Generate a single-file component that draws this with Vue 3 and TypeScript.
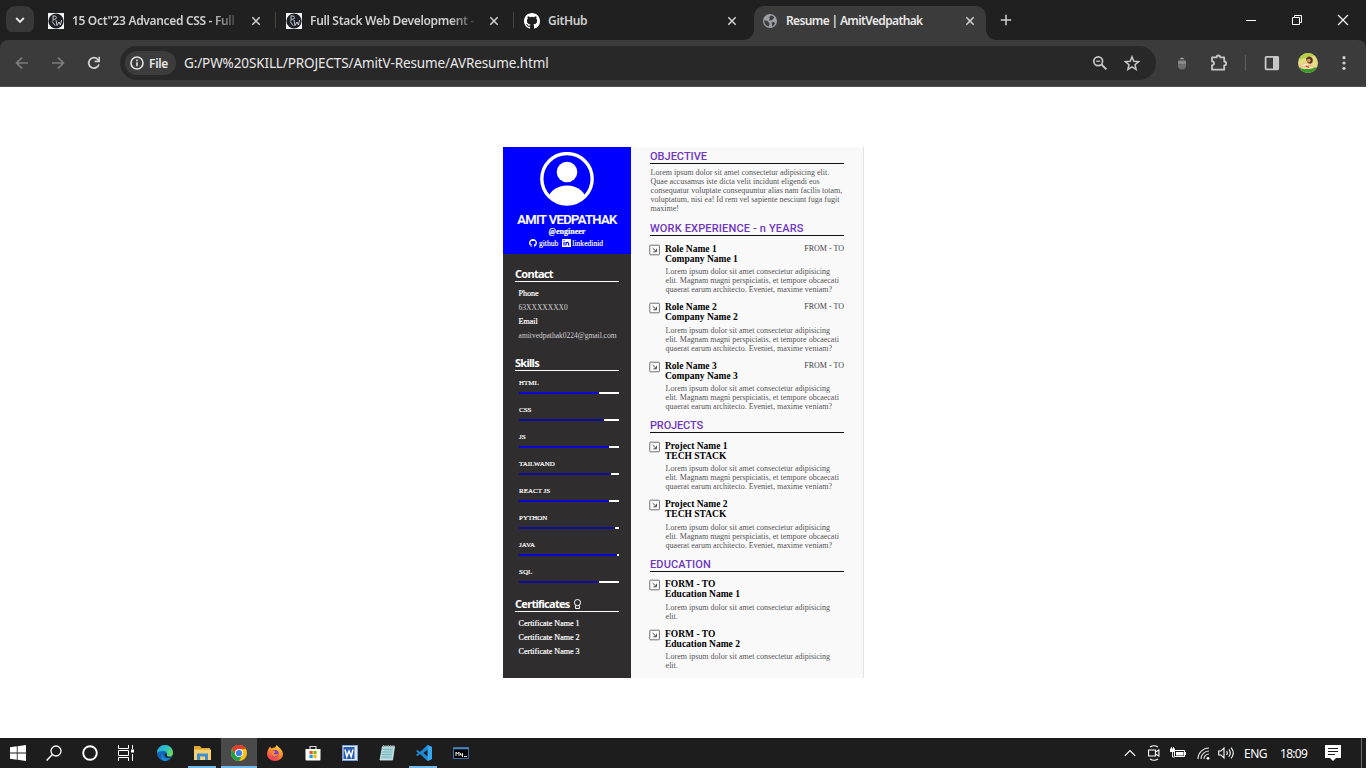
<script setup lang="ts">
interface Tab { title: string; icon: 'pw' | 'github' | 'globe'; active?: boolean }
interface Entry { title: string; sub: string; period?: string; lines: string[] }
interface Section { title: string; cls: string; entries: Entry[] }

const tabs: Tab[] = [
  { title: '15 Oct"23 Advanced CSS - Full', icon: 'pw' },
  { title: 'Full Stack Web Development -', icon: 'pw' },
  { title: 'GitHub', icon: 'github' },
  { title: 'Resume | AmitVedpathak', icon: 'globe', active: true },
]

const objective: string[] = [
  'Lorem ipsum dolor sit amet consectetur adipisicing elit.',
  'Quae accusamus iste dicta velit incidunt eligendi eos',
  'consequatur voluptate consequuntur alias nam facilis totam,',
  'voluptatum, nisi ea! Id rem vel sapiente nesciunt fuga fugit',
  'maxime!',
]

const longText: string[] = [
  'Lorem ipsum dolor sit amet consectetur adipisicing',
  'elit. Magnam magni perspiciatis, et tempore obcaecati',
  'quaerat earum architecto. Eveniet, maxime veniam?',
]
const shortText: string[] = ['Lorem ipsum dolor sit amet consectetur adipisicing', 'elit.']

const sections: Section[] = [
  {
    title: 'WORK EXPERIENCE - n YEARS',
    cls: 'work',
    entries: [1, 2, 3].map((n) => ({ title: `Role Name ${n}`, sub: `Company Name ${n}`, period: 'FROM - TO', lines: longText })),
  },
  {
    title: 'PROJECTS',
    cls: 'projects',
    entries: [1, 2].map((n) => ({ title: `Project Name ${n}`, sub: 'TECH STACK', lines: longText })),
  },
  {
    title: 'EDUCATION',
    cls: 'education',
    entries: [1, 2].map((n) => ({ title: 'FORM - TO', sub: `Education Name ${n}`, lines: shortText })),
  },
]

const skills: { name: string; level: number }[] = [
  { name: 'HTML', level: 80 },
  { name: 'CSS', level: 85 },
  { name: 'JS', level: 90 },
  { name: 'TAILWAND', level: 92 },
  { name: 'REACT JS', level: 90 },
  { name: 'PYTHON', level: 96 },
  { name: 'JAVA', level: 98 },
  { name: 'SQL', level: 80 },
]
const certificates: string[] = ['Certificate Name 1', 'Certificate Name 2', 'Certificate Name 3']

const githubPath =
  'M8 0C3.58 0 0 3.58 0 8c0 3.54 2.29 6.53 5.47 7.59.4.07.55-.17.55-.38 0-.19-.01-.82-.01-1.49-2.01.37-2.53-.49-2.69-.94-.09-.23-.48-.94-.82-1.13-.28-.15-.68-.52-.01-.53.63-.01 1.08.58 1.23.82.72 1.21 1.87.87 2.33.66.07-.52.28-.87.51-1.07-1.78-.2-3.64-.89-3.64-3.95 0-.87.31-1.59.82-2.15-.08-.2-.36-1.02.08-2.12 0 0 .67-.21 2.2.82a7.6 7.6 0 0 1 4 0c1.53-1.04 2.2-.82 2.2-.82.44 1.1.16 1.92.08 2.12.51.56.82 1.27.82 2.15 0 3.07-1.87 3.75-3.65 3.95.29.25.54.73.54 1.48 0 1.07-.01 1.93-.01 2.2 0 .21.15.46.55.38A8.01 8.01 0 0 0 16 8c0-4.42-3.58-8-8-8z'
</script>

<template>
  <div class="screen">
    <header class="tabstrip">
      <div class="tab-search">
        <svg width="10" height="8" viewBox="0 0 10 8"><path d="M1.2 2l3.8 3.8L8.8 2" fill="none" stroke="#e6e6e6" stroke-width="1.9" /></svg>
      </div>
      <div class="tabs">
        <div v-for="(tab, i) in tabs" :key="tab.title" class="tab" :class="{ active: tab.active, divided: i < 2 }">
          <svg v-if="tab.icon === 'pw'" class="favicon" viewBox="0 0 16 16">
            <rect width="16" height="16" fill="#f4f4f4" />
            <circle cx="8" cy="8" r="7.6" fill="#1a2026" />
            <path d="M5 2.6v5.6M5 3h1.8a1.6 1.6 0 0 1 0 3.2H5M4.2 8.4l3 4.4M8 7l1 5.6 2-3.6 1.4 3 1.2-5" fill="none" stroke="#d6d9dc" stroke-width=".9" />
          </svg>
          <svg v-else-if="tab.icon === 'github'" class="favicon" viewBox="0 0 16 16"><path :d="githubPath" fill="#fff" /></svg>
          <svg v-else class="favicon globe" viewBox="0 0 14 14">
            <circle cx="7" cy="7" r="7" fill="#9aa0a6" />
            <path d="M7.8 1.4c1.4.1 2.6.8 3.5 1.9L10 5.2 8 6.5H5.8L7 4.4 6 3.6zM1.3 6.2l2.6.6 2 1.7.7 1.8-1 2.1A5.8 5.8 0 0 1 1.3 6.2zM8.4 8.5l2.7-.4.9 1.5a6 6 0 0 1-3 2.9l.1-2.1z" fill="#3c3c3c" />
          </svg>
          <span class="tab-title">{{ tab.title }}</span>
          <svg class="close" viewBox="0 0 10 10"><path d="M1.3 1.3l7.4 7.4M8.7 1.3L1.3 8.7" stroke="#d4d4d4" stroke-width="1.5" /></svg>
        </div>
      </div>
      <svg class="plus" viewBox="0 0 12 12"><path d="M6 .8v10.4M.8 6h10.4" stroke="#d0d0d0" stroke-width="1.5" /></svg>
      <div class="win-controls">
        <svg width="12" height="12" viewBox="0 0 12 12"><path d="M1 6.5h10" stroke="#fff" /></svg>
        <svg width="12" height="12" viewBox="0 0 12 12"><path d="M1.5 3.5h7v7h-7zM3.5 3.5v-2h7v7h-2" fill="none" stroke="#fff" /></svg>
        <svg width="12" height="12" viewBox="0 0 12 12"><path d="M1 1l10 10M11 1L1 11" stroke="#fff" stroke-width="1.1" /></svg>
      </div>
    </header>

    <div class="toolbar">
      <div class="nav">
        <svg width="14" height="14" viewBox="0 0 14 14"><path d="M13 7H1.8M7 1.6L1.6 7 7 12.4" fill="none" stroke="#7b7b7b" stroke-width="1.7" /></svg>
        <svg width="14" height="14" viewBox="0 0 14 14"><path d="M1 7h11.2M7 1.6L12.4 7 7 12.4" fill="none" stroke="#7b7b7b" stroke-width="1.7" /></svg>
        <svg width="14" height="14" viewBox="0 0 14 14"><path d="M11.9 8.4A5.2 5.2 0 1 1 10.8 3.4L12.2 5" fill="none" stroke="#d0d0d0" stroke-width="1.8" /><path d="M13 .8v5.4H7.6V4.6h3.8V.8z" fill="#d0d0d0" /></svg>
      </div>
      <div class="omnibox">
        <div class="chip">
          <svg width="14" height="14" viewBox="0 0 14 14"><circle cx="7" cy="7" r="6" fill="none" stroke="#e3e3e3" stroke-width="1.6" /><path d="M7 6.2v4M7 3.6v1.6" stroke="#e3e3e3" stroke-width="1.6" /></svg>
          <span>File</span>
        </div>
        <span class="url">G:/PW%20SKILL/PROJECTS/AmitV-Resume/AVResume.html</span>
        <svg class="lens" width="16" height="16" viewBox="0 0 16 16"><circle cx="6.2" cy="6.2" r="4.4" fill="none" stroke="#c7c7c7" stroke-width="1.7" /><path d="M9.4 9.4l5 5" stroke="#c7c7c7" stroke-width="2" /><path d="M4.2 6.2h4" stroke="#c7c7c7" stroke-width="1.3" /></svg>
        <svg class="star" width="16" height="16" viewBox="0 0 16 16"><path d="M8 1.8l1.8 4.4 4.8.4-3.6 3.1 1.1 4.6L8 11.8l-4.1 2.5L5 9.7 1.4 6.6l4.8-.4z" fill="none" stroke="#c7c7c7" stroke-width="1.5" /></svg>
      </div>
      <div class="extensions">
        <svg width="8" height="14" viewBox="0 0 8 14"><path d="M1.4 3.2Q4-.4 6.6 3.2z" fill="#a2a2a2" /><rect x="0" y="4.6" width="8" height="3.8" rx="1" fill="#8a8a8a" /><path d="M0 8h8v2.3Q7.200 13.500 4 13.600.8 13.500 0 10.300z" fill="#707070" /></svg>
        <svg width="18" height="18" viewBox="0 0 18 18"><path d="M2 3.3h4.6c0-2.4 3.6-2.4 3.6 0h4v4.2c2.6.3 2.6 3.600 0 3.900v4.300H2v-4.300c2.700-.4 2.700-3.700 0-4z" fill="none" stroke="#c7c7c7" stroke-width="1.8" stroke-linejoin="round" /></svg>
        <i class="bar-sep"></i>
        <svg width="16" height="16" viewBox="0 0 16 16"><rect x="1.6" y="1.9" width="12.6" height="12.4" rx=".8" fill="none" stroke="#c7c7c7" stroke-width="1.8" /><path d="M9 1.5h5.5v13H9z" fill="#c7c7c7" /></svg>
        <svg width="20" height="20" viewBox="0 0 20 20">
          <defs><clipPath id="avatar"><circle cx="10" cy="10" r="10" /></clipPath></defs>
          <g clip-path="url(#avatar)">
            <rect width="20" height="20" fill="#e3dc84" />
            <path d="M0 0h20v3.5l-7-.5-6 2-7 2z" fill="#b4cf45" />
            <path d="M0 14.5h20V20H0z" fill="#3c9a2b" />
            <path d="M1.5 14Q1 10.5 5 10.5q4-1.5 8 1l3.5 2.5-2 1.5q-7 1-13-1.5z" fill="#f0c48a" />
            <path d="M8.500 5q3.500-3 6 .5 1 3.500-1.500 5-4.500 1-5-5.500z" fill="#5c3220" />
            <circle cx="10.8" cy="7.6" r="1.8" fill="#d99c5d" />
            <path d="M4 12.5l6-1.5M3 15q6 1 12-.5" fill="none" stroke="#fff1cc" />
            <path d="M8 13l3 1.5" stroke="#b0482c" stroke-width="1.2" />
          </g>
        </svg>
        <svg width="4" height="16" viewBox="0 0 4 16" fill="#d0d0d0"><circle cx="2" cy="2.7" r="1.6" /><circle cx="2" cy="8" r="1.6" /><circle cx="2" cy="13.3" r="1.6" /></svg>
      </div>
    </div>

    <main class="page">
      <article class="resume">
        <aside class="side">
          <div class="profile">
            <svg class="portrait" viewBox="0 0 54 54">
              <defs><clipPath id="bust"><circle cx="27" cy="27" r="25" /></clipPath></defs>
              <circle cx="27" cy="26.8" r="25.2" fill="none" stroke="#fff" stroke-width="3.4" />
              <circle cx="27" cy="20" r="10.3" fill="#fff" />
              <ellipse cx="27" cy="50" rx="19.6" ry="16.6" fill="#fff" clip-path="url(#bust)" />
            </svg>
            <h1>AMIT VEDPATHAK</h1>
            <p class="handle">@engineer</p>
            <div class="links">
              <svg width="8" height="8" viewBox="0 0 16 16"><path :d="githubPath" fill="#fff" /></svg>
              <span class="gh">github</span>
              <svg width="9" height="8" viewBox="0 0 9 8"><rect width="9" height="8" rx=".6" fill="#fff" /><path d="M2 3.1v3.5M4 6.6V3.1M4 4.5q.2-1.1 1.3-1.1T6.6 4.6v2" fill="none" stroke="#00f" stroke-width="1.1" /><path d="M1.4 1.2h1.2v1.1H1.4z" fill="#00f" /></svg>
              <span class="li">linkedinid</span>
            </div>
          </div>
          <section class="contact">
            <h3>Contact</h3>
            <p>Phone</p>
            <p class="dim">63XXXXXXX0</p>
            <p>Email</p>
            <p class="dim">amitvedpathak0224@gmail.com</p>
          </section>
          <section class="skills">
            <h3>Skills</h3>
            <div v-for="s in skills" :key="s.name" class="skill">
              <span>{{ s.name }}</span>
              <div class="meter"><div class="fill" :style="{ width: s.level + '%' }"></div></div>
            </div>
          </section>
          <section class="certs">
            <h3>
              <span>Certificates</span>
              <svg width="9" height="10" viewBox="0 0 9 10"><circle cx="4.5" cy="3.6" r="3.1" fill="none" stroke="#fff" /><path d="M2.6 6.3v3.2h3.8V6.3" fill="none" stroke="#fff" /></svg>
            </h3>
            <p v-for="c in certificates" :key="c">{{ c }}</p>
          </section>
        </aside>

        <div class="content">
          <section class="objective">
            <h2>OBJECTIVE</h2>
            <p class="copy"><span v-for="l in objective" :key="l">{{ l }}</span></p>
          </section>
          <section v-for="s in sections" :key="s.title" :class="s.cls">
            <h2>{{ s.title }}</h2>
            <div v-for="(e, i) in s.entries" :key="i" class="entry">
              <svg class="marker" viewBox="0 0 11 11"><rect x=".8" y=".2" width="9.6" height="9.6" rx=".6" fill="#fff" stroke="#6c7072" /><path d="M3.6 3l3.4 3.4M7.400 3.800v3H4.400" fill="none" stroke="#444" stroke-width="1" /></svg>
              <div class="entry-body">
                <div class="entry-head"><strong>{{ e.title }}</strong><span v-if="e.period">{{ e.period }}</span></div>
                <strong>{{ e.sub }}</strong>
                <p class="copy"><span v-for="l in e.lines" :key="l">{{ l }}</span></p>
              </div>
            </div>
          </section>
        </div>
      </article>
    </main>

    <footer class="taskbar">
      <div class="apps">
        <div class="cell"><svg width="16" height="16" viewBox="0 0 16 16" fill="#fff"><path d="M0 2.3l6.8-1v6.3H0zM7.6 1.2L16 0v7.6H7.6zM0 8.4h6.8v6.3L0 13.7zM7.6 8.4H16V16l-8.4-1.2z" /></svg></div>
        <div class="cell"><svg width="16" height="16" viewBox="0 0 16 16"><circle cx="10" cy="6" r="5" fill="none" stroke="#fff" stroke-width="1.3" /><path d="M6.4 9.6L.6 15.6" stroke="#fff" stroke-width="1.4" /></svg></div>
        <div class="cell"><svg width="16" height="16" viewBox="0 0 16 16"><circle cx="8" cy="8" r="6.8" fill="none" stroke="#fff" stroke-width="1.9" /></svg></div>
        <div class="cell"><svg width="16" height="16" viewBox="0 0 16 16"><path d="M.5 0v3.5h10V0M.5 16v-3.5h10V16M.5 5.5h10v5H.5zM14.5 0v4M14.5 9v7" fill="none" stroke="#fff" /><path d="M13 4.5h3v3h-3z" fill="#fff" /></svg></div>
        <div class="cell wide first">
          <svg width="16" height="16" viewBox="0 0 16 16">
            <defs><linearGradient id="edge" x1="0" x2="1" y1="0" y2=".5"><stop offset="0" stop-color="#2aa6e8" /><stop offset=".6" stop-color="#2cc3c0" /><stop offset="1" stop-color="#6bdc5a" /></linearGradient></defs>
            <circle cx="8" cy="8" r="8" fill="#1268b8" />
            <path d="M0 8a8 8 0 0 1 16 0c0 2.6-2.2 3.6-4.3 3.6-2 0-2.7-.8-1.9-1.7C10.6 8.5 9.5 6 6.5 6 3 6 .4 6.7 0 8z" fill="url(#edge)" />
            <path d="M5.4 9.7c.2 3 3 5 7.9 3.3-1.5 2-3.8 3.1-6 3-3-.8-3.9-4.8-1.9-6.3z" fill="#1a8ad8" />
            <path d="M8.2 8.2c-1 1.4-.2 4.1 2.6 4.6 2 .3 3.6-.3 4.3-1.1-2.3.5-4.9.1-5.4-1.1.5-1.4-.3-2.2-1.5-2.4z" fill="#1d1d1d" />
          </svg>
        </div>
        <div class="cell wide open"><svg width="17" height="16" viewBox="0 0 17 16"><path d="M0 1h6l1.5 2H16v4H0z" fill="#e0a32c" /><path d="M0 4.5h17V15H0z" fill="#f7d272" /><path d="M3 15V8.5h11V15h-3v-3.5H6V15z" fill="#3f8fd3" /></svg></div>
        <div class="cell current"><svg width="16" height="16" viewBox="0 0 16 16"><circle cx="8" cy="8" r="8" fill="#fbc116" /><path d="M1.07 4A8 8 0 0 1 14.93 4H8L4.54 10z" fill="#e33b2e" /><path d="M1.07 4A8 8 0 0 0 8 16l3.46-6H4.54z" fill="#24a148" /><circle cx="8" cy="8" r="4" fill="#fff" /><circle cx="8" cy="8" r="3.1" fill="#3b7ded" /></svg></div>
        <div class="cell wide">
          <svg width="16" height="16" viewBox="0 0 16 16">
            <defs><linearGradient id="fox" x1=".8" x2=".3" y1="0" y2="1"><stop offset="0" stop-color="#ffe03c" /><stop offset=".5" stop-color="#ff8a25" /><stop offset="1" stop-color="#f5305c" /></linearGradient></defs>
            <path d="M1.5 4L3 1.5l1.5 2Q6 2.5 8 2.5L9.8 0q1.2 2 3.2 3.3Q16 6 16 9a8 7 0 0 1-16 0q0-3 1.5-5z" fill="url(#fox)" />
            <circle cx="8" cy="8.6" r="3.6" fill="#7b3fd0" />
            <path d="M4 6.5l3.5-.8 1 1.5-2 1.2Q8 10 11.5 9 10 12 7 11.5 4 10.5 4 6.5z" fill="#ff8b28" />
          </svg>
        </div>
        <div class="cell wide word"><svg width="16" height="16" viewBox="0 0 16 16"><path d="M.5 4h15v10.5q0 1-1 1h-13q-1 0-1-1z" fill="#fff" /><path d="M5 4V1.5h6V4" fill="none" stroke="#d8d8d8" stroke-width="1.2" /><path d="M4.5 6h3.2v3.2H4.5z" fill="#f25022" /><path d="M8.4 6h3.2v3.2H8.4z" fill="#7fba00" /><path d="M4.5 9.9h3.2v3.2H4.5z" fill="#00a4ef" /><path d="M8.4 9.9h3.2v3.2H8.4z" fill="#ffb900" /></svg></div>
        <div class="cell wide word"><svg width="16" height="16" viewBox="0 0 16 16"><rect x=".5" y=".5" width="15" height="15" fill="#dfe9f7" stroke="#7ba1d6" /><rect x="1.5" y="2" width="11" height="12" fill="#2a5db4" /><path d="M3 4.5l1.8 7L7 6l2.2 5.5 1.8-7" fill="none" stroke="#fff" stroke-width="1.5" /></svg></div>
        <div class="cell wide word"><svg width="16" height="16" viewBox="0 0 16 16"><path d="M3.5 1.5h12L13.5 15H1z" fill="#a9d8dc" stroke="#e8f5f5" stroke-width=".8" /><path d="M3.5 4.5h10M3.2 7h10M3 9.5h10M2.5 12h10" stroke="#6ba7b1" stroke-width=".7" /><path d="M4 1h11.5" stroke="#8d9aa0" stroke-width="1.8" stroke-dasharray="1 .7" /></svg></div>
        <div class="cell wide open word"><svg width="16" height="16" viewBox="0 0 16 16"><path d="M11.5 0L16 2v12l-4.500 2L4 8.900 1.500 11 0 10l2.200-2L0 6l1.500-1L4 7.100zM11.700 4.500L7.300 8l4.400 3.500z" fill="#1d8ad6" fill-rule="evenodd" /><path d="M11.700 0L16 2v12l-4.300 2z" fill="#35a8f0" /></svg></div>
        <div class="cell wide word"><svg width="16" height="12" viewBox="0 0 16 12"><rect x=".5" y=".5" width="15" height="11" fill="#050505" stroke="#3b6ea5" /><path d="M1 1.500h14" stroke="#4a83c4" stroke-width="1.600" /><path d="M3 9V5l1.500 2L6 5v4M7.500 6v2h2M9.500 6v4M11 9.500h3" fill="none" stroke="#fff" stroke-width=".9" /></svg></div>
      </div>
      <div class="tray">
        <svg width="12" height="8" viewBox="0 0 12 8"><path d="M.8 6.8L6 1.6l5.2 5.2" fill="none" stroke="#fff" stroke-width="1.2" /></svg>
        <svg class="t-cam" width="12" height="16" viewBox="0 0 12 16"><path d="M.6 5h6.8v6H.6zM7.4 7l3.5-2v6l-3.5-2M2 2q4-2.6 8 0M2 14q4 2.6 8 0" fill="none" stroke="#fff" stroke-width="1.1" /></svg>
        <svg class="t-bat" width="16" height="12" viewBox="0 0 16 12"><path d="M4.5 3.5h10v6h-10z" fill="none" stroke="#fff" /><path d="M6 5h7.5v3.5H6zM15 5h1v3h-1zM0 1.5h5V5H0z" fill="#fff" /><path d="M1.5 0v2M3.5 0v2M2.5 5v5h2" fill="none" stroke="#fff" stroke-width=".9" /></svg>
        <svg class="t-wifi" width="13" height="13" viewBox="0 0 13 13"><path d="M1 12A11 11 0 0 1 12 1M4 12a8 8 0 0 1 8-8M7 12a5 5 0 0 1 5-5" fill="none" stroke="#ddd" stroke-width="1.1" /><circle cx="11" cy="11.3" r="1.4" fill="#fff" /></svg>
        <svg class="t-vol" width="17" height="14" viewBox="0 0 17 14"><path d="M.7 5H3L6 2v10L3 9H.7zM8.5 5q1.6 2 0 4M10.8 3.3q3 3.7 0 7.4M13 1.6q4.6 5.4 0 10.8" fill="none" stroke="#fff" stroke-width="1.1" /></svg>
        <span class="t-lang">ENG</span>
        <span class="t-time">18:09</span>
        <svg class="t-note" width="16" height="16" viewBox="0 0 16 16"><path d="M0 0h16v13h-5l-3 3-3-3H0z" fill="#fff" /><path d="M3 3.5h10M3 6.5h10M3 9.5h7" stroke="#1d1d1d" /></svg>
        <i></i>
      </div>
    </footer>
  </div>
</template>

<style>
body {
  margin: 0;
  background: #fff;
}
</style>

<style scoped>
.screen { width: 1366px; height: 768px; display: flex; flex-direction: column; overflow: hidden; background: #fff; font-family: "Noto Sans", sans-serif; }
svg { display: block; flex: none; }
h1, h2, h3, p { margin: 0; font-weight: normal; white-space: nowrap; }

.tabstrip { height: 40px; background: #202020; display: flex; align-items: center; }
.tab-search { width: 28px; height: 28px; margin-left: 6px; border-radius: 9px; background: #383838; display: flex; align-items: center; justify-content: center; }
.tabs { display: flex; margin-left: 4px; align-self: stretch; }
.tab { position: relative; box-sizing: border-box; width: 232px; height: 34px; margin: 6px 6px 0 0; padding: 0 9px 5px 10px; display: flex; align-items: center; border-radius: 10px 10px 0 0; color: #cfcfcf; }
.tab.divided::after { content: ""; position: absolute; right: -6px; top: 6px; width: 1px; height: 16px; background: #474747; }
.tab.active { background: #3b3b3b; color: #e8e8e8; margin-left: 2px; margin-right: 0; padding-right: 11px; }
.tab.active::before, .tab.active::after { content: ""; position: absolute; bottom: 0; width: 10px; height: 10px; }
.tab.active::before { left: -10px; background: radial-gradient(circle at 0 0, transparent 9.5px, #3b3b3b 10px); }
.tab.active::after { right: -10px; background: radial-gradient(circle at 100% 0, transparent 9.5px, #3b3b3b 10px); }
.favicon { width: 16px; height: 16px; }
.globe { width: 14px; height: 14px; margin: 0 1px 0 -1px; }
.tab-title { width: 165px; margin-left: 8px; font-size: 12px; line-height: 18px; font-weight: 600; letter-spacing: -0.33px; white-space: nowrap; }
.active .tab-title { letter-spacing: -0.64px; }
.divided .tab-title { mask-image: linear-gradient(90deg, #000 140px, transparent 170px); }
.close { width: 10px; height: 10px; margin-left: auto; }
.plus { width: 12px; height: 12px; margin-left: 14px; }
.win-controls { margin-left: auto; display: flex; gap: 34px; padding-right: 17px; }

.toolbar { box-sizing: border-box; height: 47px; background: #3b3b3b; border-bottom: 1px solid #505050; border-radius: 8px 8px 0 0; box-shadow: 0 -8px 0 #202020; display: flex; align-items: center; }
.nav { display: flex; gap: 22px; margin-left: 15px; }
.omnibox { width: 1036px; height: 34px; margin-left: 19px; border-radius: 17px; background: #282828; display: flex; align-items: center; flex: none; }
.chip { box-sizing: border-box; width: 51px; height: 24px; margin-left: 5px; padding-left: 5px; border-radius: 12px; background: #3c3c3c; display: flex; align-items: center; gap: 5px; font-size: 12px; font-weight: 600; letter-spacing: -0.3px; color: #e8e8e8; }
.url { margin-left: 8px; font-size: 13.5px; letter-spacing: -0.12px; color: #e8e8e8; white-space: nowrap; }
.lens { margin-left: auto; }
.star { margin: 0 16px; }
.extensions { display: flex; align-items: center; flex: 1; }
.extensions svg:nth-of-type(1) { margin-left: 22px; }
.extensions svg:nth-of-type(2) { margin-left: 24px; }
.bar-sep { width: 1px; height: 16px; margin-left: 17px; background: #5e5e5e; }
.extensions svg:nth-of-type(3) { margin-left: 18px; }
.extensions svg:nth-of-type(4) { margin-left: 18px; }
.extensions svg:nth-of-type(5) { margin-left: 24px; }

.page { height: 651px; box-sizing: border-box; padding: 60px 0 0 503px; background: #fff; }
.resume { width: 361px; height: 531px; display: flex; font-family: "Liberation Serif", serif; }
.side { width: 128px; background: #2f2d2e; color: #fff; font-size: 8px; }
.profile { height: 107px; background: #00f; display: flex; flex-direction: column; align-items: center; }
.portrait { width: 54px; height: 54px; margin-top: 5px; }
.profile h1 { margin-top: 6px; font: 500 13px/15px Roboto, sans-serif; letter-spacing: -0.6px; -webkit-text-stroke: 0.2px #fff; }
.handle { font-weight: bold; line-height: 9px; -webkit-text-stroke: 0.2px #fff; }
.links { display: flex; align-items: center; height: 14px; margin-right: 2px; font-size: 7.6px; white-space: nowrap; -webkit-text-stroke: 0.15px #fff; }
.gh { margin: 0 4px 0 2px; }
.li { margin-left: 1px; }
.side section { width: 104px; margin-left: 12px; }
.side h3 { display: flex; height: 14px; border-bottom: 1px solid #fff; font: bold 11px/14px "Noto Sans", sans-serif; letter-spacing: -0.72px; gap: 3px; }
.side section p { padding-left: 3.6px; line-height: 14px; -webkit-text-stroke: 0.2px currentColor; }
.contact { padding-top: 13px; height: 76px; }
.contact h3 { margin-bottom: 5px; }
.side section .dim { color: #d2d2d2; font-size: 7.5px; -webkit-text-stroke: 0; }
.skills { padding-top: 13px; height: 228px; }
.skills h3 { margin-bottom: 7px; }
.skill { height: 27px; padding-left: 4px; font-size: 7px; line-height: 10px; -webkit-text-stroke: 0.2px #fff; }
.meter { height: 2px; margin-top: 4px; background: #fff; }
.fill { height: 2px; background: #0a06d8; }
.skill:nth-child(odd) .fill { background: #110d9c; }
.certs { padding-top: 12px; }
.certs h3 { height: 15px; margin-bottom: 5px; align-items: center; }

.content { box-sizing: border-box; width: 233px; padding: 0 19px; background: #f9f9f9; border-right: 1px solid #e3e3e3; }
.content h2 { height: 16px; border-bottom: 1px solid #111; font: 500 11px/19px Roboto, sans-serif; color: #6f35c4; }
.copy { font-size: 8px; line-height: 9px; color: #555; }
.copy span { display: block; width: max-content; white-space: nowrap; }
.objective { height: 72px; }
.objective .copy { margin: 4px 0 0 0.6px; }
.work { height: 197px; }
.work h2 { letter-spacing: 0.16px; }
.projects { height: 139px; }
.projects h2 { letter-spacing: -0.15px; }
.education h2 { letter-spacing: 0.15px; }
.entry { display: flex; margin-bottom: 8.4px; }
h2 + .entry { margin-top: 8px; }
.entry .copy { margin: 3.2px 0 -0.2px 0.6px; }
.education h2 + .entry { margin-top: 7px; }
.education .entry { margin-bottom: 8px; }
.education h2 + .entry .copy { margin-top: 4px; margin-bottom: 0; }
.marker { width: 11px; height: 11px; margin-top: 1px; margin-left: -1px; overflow: visible; }
.entry-body { width: 179px; margin-left: 5px; font-size: 9.5px; line-height: 10px; }
.entry-body strong { display: block; width: max-content; color: #000; }
.entry-head { display: flex; justify-content: space-between; white-space: nowrap; }
.entry-head span { font-size: 8px; color: #444; }

.taskbar { height: 30px; background: #1d1d1d; display: flex; justify-content: space-between; }
.apps { display: flex; }
.cell { box-sizing: border-box; width: 36px; display: flex; align-items: center; justify-content: center; }
.wide { width: 37px; }
.first { margin-left: 2.5px; }
.word { padding-left: 2px; }
.open { background: linear-gradient(#76b9ed, #76b9ed) center bottom / 28px 2px no-repeat; }
.current { background: #4a4a4a; box-shadow: inset 0 -2px #76b9ed; }
.tray { display: flex; align-items: center; color: #fff; font-size: 12px; white-space: nowrap; }
.t-cam { margin-left: 12px; }
.t-bat { margin-left: 10px; }
.t-wifi { margin-left: 11px; }
.t-vol { margin-left: 8px; }
.t-lang { margin-left: 9px; width: 23px; letter-spacing: -0.5px; }
.t-time { margin-left: 13px; width: 28px; letter-spacing: -0.7px; }
.t-note { margin-left: 17px; }
.tray i { width: 1px; align-self: stretch; margin: 0 4px 0 20px; background: #6a6a6a; }
</style>
